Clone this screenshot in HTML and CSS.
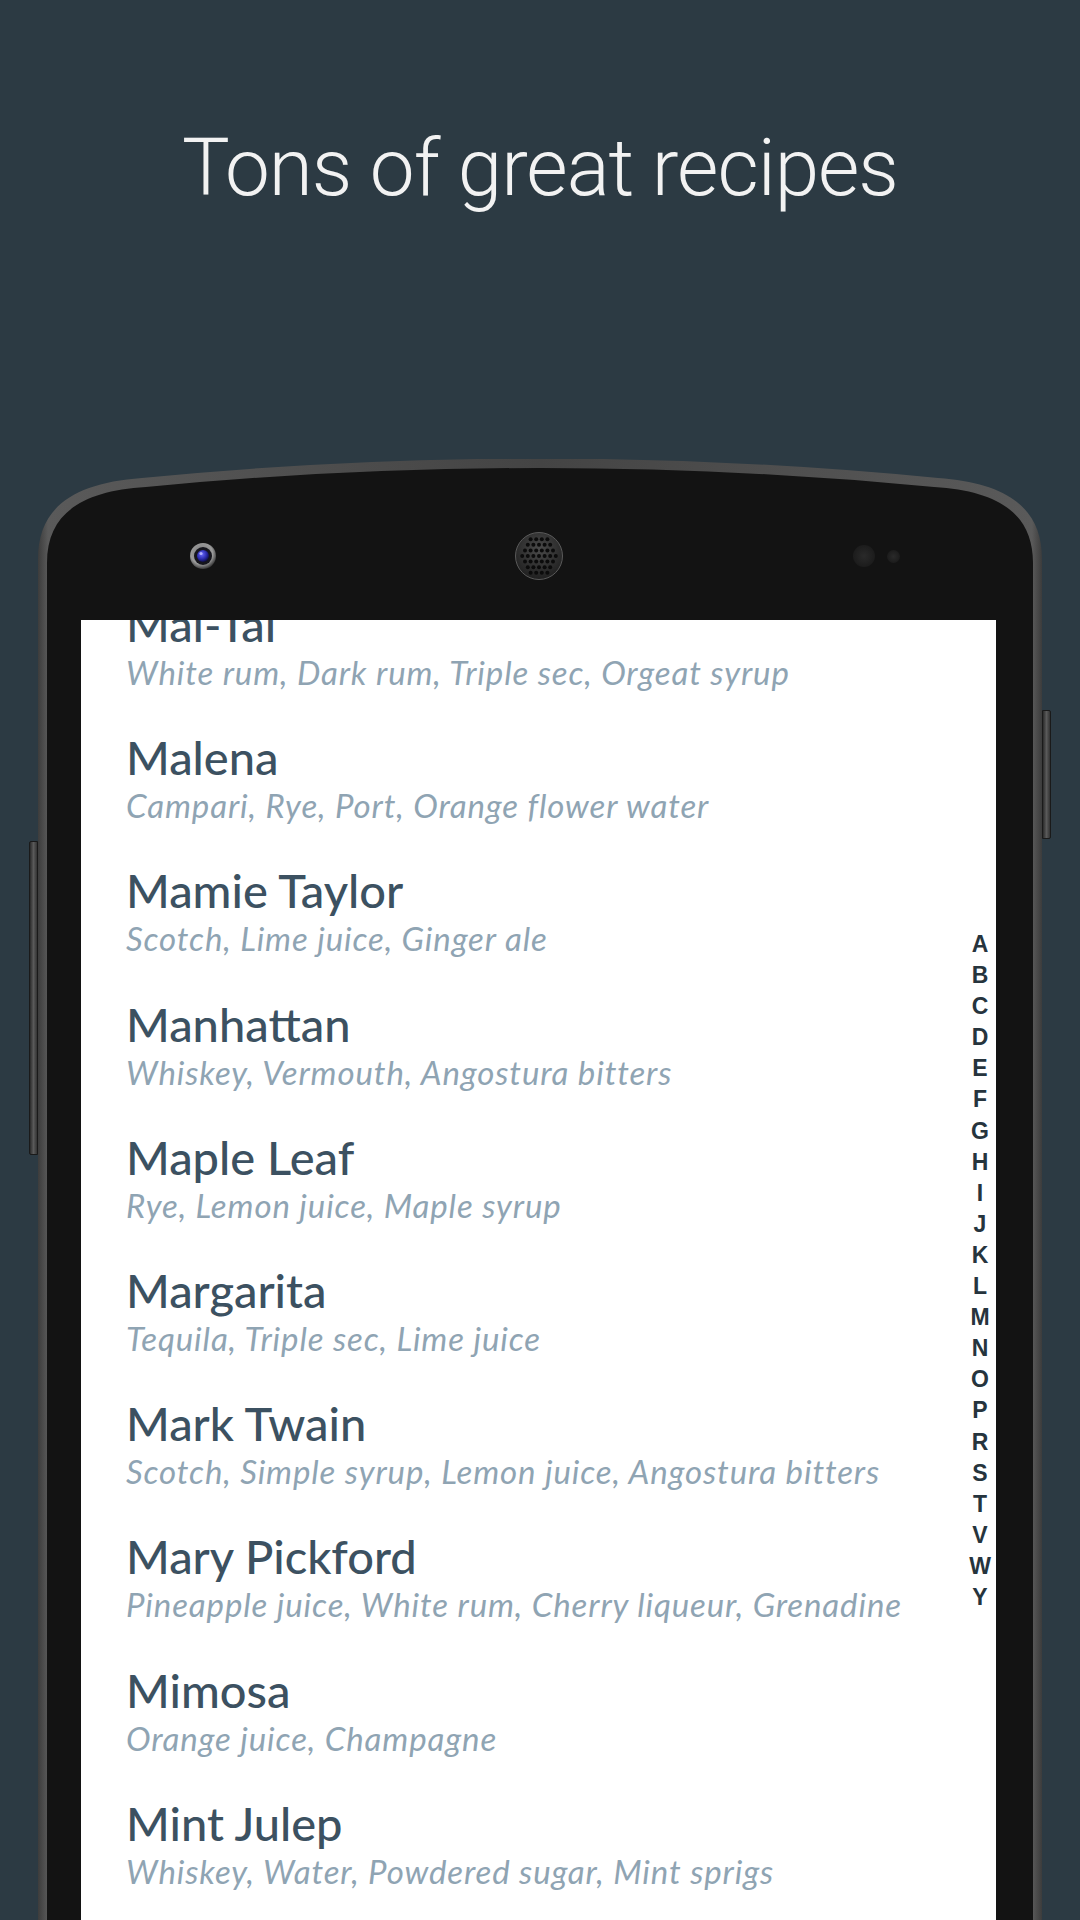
FILE: index.html
```html
<!DOCTYPE html>
<html lang="en">
<head>
<meta charset="utf-8">
<title>Tons of great recipes</title>
<link rel="stylesheet" href="styles.css">
</head>
<body>
<header class="hero">
  <h1 class="hero-title">Tons of great recipes</h1>
</header>
<div class="phone">
  <svg class="phone-frame" width="1004" height="1461" viewBox="0 0 1004 1461" aria-hidden="true">
    <defs>
      <linearGradient id="rim" x1="0" y1="0" x2="1" y2="0">
        <stop offset="0" stop-color="#3c3c3c"/>
        <stop offset="0.01" stop-color="#5a5a5a"/>
        <stop offset="0.5" stop-color="#444"/>
        <stop offset="0.99" stop-color="#5a5a5a"/>
        <stop offset="1" stop-color="#3c3c3c"/>
      </linearGradient>
    </defs>
    <path d="M0,1461 L0,100 C0,48 36,24 104,19 Q502,-20 900,19 C968,24 1004,48 1004,100 L1004,1461 Z" fill="url(#rim)"/>
    <path d="M9,1461 L9,104 C9,55 43,32 108,28 Q502,-10 896,28 C961,32 995,55 995,104 L995,1461 Z" fill="#131313"/>
  </svg>
  <div class="side-btn side-btn-left"></div>
  <div class="side-btn side-btn-right"></div>

  <div class="bezel">
    <svg class="camera" width="28" height="28" viewBox="0 0 28 28" aria-hidden="true">
      <defs>
        <radialGradient id="camRing" cx="0.45" cy="0.4" r="0.6">
          <stop offset="0" stop-color="#777"/>
          <stop offset="0.7" stop-color="#9a9a9a"/>
          <stop offset="1" stop-color="#3a3a3a"/>
        </radialGradient>
        <radialGradient id="camLens" cx="0.4" cy="0.35" r="0.7">
          <stop offset="0" stop-color="#6a6aff"/>
          <stop offset="0.6" stop-color="#2828a8"/>
          <stop offset="1" stop-color="#0a0a30"/>
        </radialGradient>
      </defs>
      <circle cx="14" cy="14" r="13" fill="url(#camRing)"/>
      <circle cx="14" cy="14" r="9" fill="#15151c"/>
      <circle cx="14" cy="14" r="6" fill="url(#camLens)"/>
      <circle cx="12" cy="11.5" r="1.6" fill="#c8c8ff" opacity="0.8"/>
    </svg>
    <svg class="speaker" width="50" height="50" viewBox="0 0 50 50" aria-hidden="true">
      <defs>
        <radialGradient id="spk" cx="0.5" cy="0.35" r="0.7">
          <stop offset="0" stop-color="#4a4a4a"/>
          <stop offset="1" stop-color="#1c1c1c"/>
        </radialGradient>
      </defs>
      <circle cx="25" cy="25" r="23.5" fill="url(#spk)" stroke="#5a5a5a" stroke-width="1"/>
      <g fill="#0b0b0b">
        <circle cx="16.6" cy="8.2" r="2"/><circle cx="22.2" cy="8.2" r="2"/><circle cx="27.8" cy="8.2" r="2"/><circle cx="33.4" cy="8.2" r="2"/>
        <circle cx="13.8" cy="13.8" r="2"/><circle cx="19.4" cy="13.8" r="2"/><circle cx="25" cy="13.8" r="2"/><circle cx="30.6" cy="13.8" r="2"/><circle cx="36.2" cy="13.8" r="2"/>
        <circle cx="11" cy="19.4" r="2"/><circle cx="16.6" cy="19.4" r="2"/><circle cx="22.2" cy="19.4" r="2"/><circle cx="27.8" cy="19.4" r="2"/><circle cx="33.4" cy="19.4" r="2"/><circle cx="39" cy="19.4" r="2"/>
        <circle cx="8.2" cy="25" r="2"/><circle cx="13.8" cy="25" r="2"/><circle cx="19.4" cy="25" r="2"/><circle cx="25" cy="25" r="2"/><circle cx="30.6" cy="25" r="2"/><circle cx="36.2" cy="25" r="2"/><circle cx="41.8" cy="25" r="2"/>
        <circle cx="11" cy="30.6" r="2"/><circle cx="16.6" cy="30.6" r="2"/><circle cx="22.2" cy="30.6" r="2"/><circle cx="27.8" cy="30.6" r="2"/><circle cx="33.4" cy="30.6" r="2"/><circle cx="39" cy="30.6" r="2"/>
        <circle cx="13.8" cy="36.2" r="2"/><circle cx="19.4" cy="36.2" r="2"/><circle cx="25" cy="36.2" r="2"/><circle cx="30.6" cy="36.2" r="2"/><circle cx="36.2" cy="36.2" r="2"/>
        <circle cx="16.6" cy="41.8" r="2"/><circle cx="22.2" cy="41.8" r="2"/><circle cx="27.8" cy="41.8" r="2"/><circle cx="33.4" cy="41.8" r="2"/>
      </g>
    </svg>
    <div class="sensors">
      <span class="sensor sensor-big"></span>
      <span class="sensor sensor-small"></span>
    </div>
  </div>

  <main class="screen">
    <ul class="recipes">
      <li class="recipe"><span class="recipe-name">Mai-Tai</span><span class="recipe-ingredients">White rum, Dark rum, Triple sec, Orgeat syrup</span></li>
      <li class="recipe"><span class="recipe-name">Malena</span><span class="recipe-ingredients">Campari, Rye, Port, Orange flower water</span></li>
      <li class="recipe"><span class="recipe-name">Mamie Taylor</span><span class="recipe-ingredients">Scotch, Lime juice, Ginger ale</span></li>
      <li class="recipe"><span class="recipe-name">Manhattan</span><span class="recipe-ingredients">Whiskey, Vermouth, Angostura bitters</span></li>
      <li class="recipe"><span class="recipe-name">Maple Leaf</span><span class="recipe-ingredients">Rye, Lemon juice, Maple syrup</span></li>
      <li class="recipe"><span class="recipe-name">Margarita</span><span class="recipe-ingredients">Tequila, Triple sec, Lime juice</span></li>
      <li class="recipe"><span class="recipe-name">Mark Twain</span><span class="recipe-ingredients">Scotch, Simple syrup, Lemon juice, Angostura bitters</span></li>
      <li class="recipe"><span class="recipe-name">Mary Pickford</span><span class="recipe-ingredients">Pineapple juice, White rum, Cherry liqueur, Grenadine</span></li>
      <li class="recipe"><span class="recipe-name">Mimosa</span><span class="recipe-ingredients">Orange juice, Champagne</span></li>
      <li class="recipe"><span class="recipe-name">Mint Julep</span><span class="recipe-ingredients">Whiskey, Water, Powdered sugar, Mint sprigs</span></li>
    </ul>
    <ol class="alpha-index">
      <li>A</li><li>B</li><li>C</li><li>D</li><li>E</li><li>F</li><li>G</li><li>H</li><li>I</li><li>J</li><li>K</li><li>L</li><li>M</li><li>N</li><li>O</li><li>P</li><li>R</li><li>S</li><li>T</li><li>V</li><li>W</li><li>Y</li>
    </ol>
  </main>
</div>
</body>
</html>
```
FILE: styles.css
```css
* {
  box-sizing: border-box;
}

html, body {
  margin: 0;
  padding: 0;
}

body {
  width: 1080px;
  height: 1920px;
  overflow: hidden;
  background: #2c3a43;
  font-family: "Lato", "Noto Sans", sans-serif;
}

.hero {
  height: 459px;
  padding-top: 128px;
}

.hero-title {
  margin: 0;
  font-family: "Roboto", "Liberation Sans", sans-serif;
  font-weight: 300;
  font-size: 80px;
  line-height: 80px;
  color: #f2f2f2;
  text-align: center;
  letter-spacing: -1px;
}

.phone {
  position: relative;
  width: 1004px;
  height: 1461px;
  margin-left: 38px;
  padding-top: 72px;
}

.phone-frame {
  position: absolute;
  left: 0;
  top: 0;
  display: block;
}

.side-btn {
  position: absolute;
  width: 9px;
  background: linear-gradient(to right, #2a2a2a, #5a5a5a 50%, #333);
  border: 1px solid #1a1a1a;
}

.side-btn-left {
  left: -9px;
  top: 382px;
  height: 314px;
  border-radius: 2px 0 0 2px;
}

.side-btn-right {
  left: 1004px;
  top: 251px;
  height: 129px;
  border-radius: 0 2px 2px 0;
}

.bezel {
  position: relative;
  display: flex;
  align-items: center;
  height: 50px;
  margin-bottom: 39px;
  padding-left: 151px;
}

.camera {
  display: block;
  flex: none;
}

.speaker {
  display: block;
  flex: none;
  margin-left: 297px;
}

.sensors {
  display: flex;
  align-items: center;
  gap: 12px;
  margin-left: 289px;
}

.sensor {
  display: block;
  border-radius: 50%;
  background: radial-gradient(circle at 50% 50%, #2a2a2a, #1c1c1c 70%, #161616);
}

.sensor-big {
  width: 22px;
  height: 22px;
}

.sensor-small {
  width: 13px;
  height: 13px;
}

.screen {
  position: relative;
  display: block;
  height: 1300px;
  margin: 0 46px 0 43px;
  background: #ffffff;
  overflow: hidden;
}

.recipes {
  list-style: none;
  margin: -42px 0 0 0;
  padding: 0 0 0 45px;
}

.recipe {
  display: flex;
  flex-direction: column;
  height: 133.2px;
  padding-top: 18px;
}

.recipe-name {
  font-family: "Lato", "Noto Sans", sans-serif;
  font-weight: 500;
  font-size: 47px;
  line-height: 56px;
  color: #3c5161;
  white-space: nowrap;
}

.recipe-ingredients {
  font-family: "Lato", "Noto Sans", sans-serif;
  font-style: italic;
  font-weight: 400;
  font-size: 33px;
  line-height: 41px;
  letter-spacing: 0.88px;
  color: #8fa4b3;
  white-space: nowrap;
}

.alpha-index {
  position: absolute;
  top: 309px;
  right: 0;
  width: 32px;
  margin: 0;
  padding: 0;
  list-style: none;
  text-align: center;
  font-family: "Liberation Sans", Arial, sans-serif;
  font-weight: 700;
  font-size: 23px;
  line-height: 31.1px;
  color: #26343d;
}
```
